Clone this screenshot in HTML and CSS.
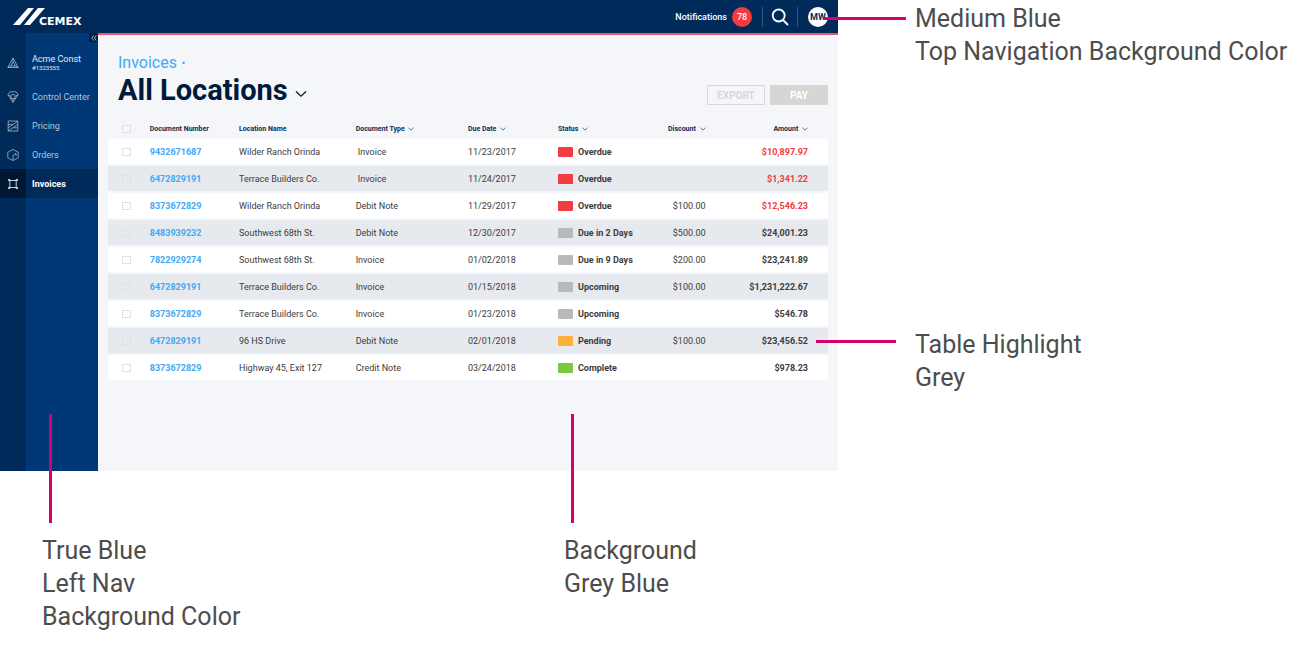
FILE: index.html
```html
<!DOCTYPE html>
<html lang="en">
<head>
<meta charset="utf-8">
<title>Invoices – All Locations</title>
<link rel="stylesheet" href="styles.css">
</head>
<body>
<svg class="symbols">
  <symbol id="chevron" viewBox="0 0 12 8"><path d="M1 1.5 6 6.2 11 1.5" fill="none" stroke="currentColor" stroke-width="1.3"/></symbol>
</svg>
<div class="sheet">
  <div class="app">
    <header class="topbar">
      <a class="brand" href="#" aria-label="Cemex home">
        <svg width="76" height="24" viewBox="0 -3 76 24">
          <path d="M0 17 15 0H21L7 17ZM11 17 25 0H32L17 17Z" fill="#fff"/>
          <text class="wordmark" x="26" y="17">CEMEX</text>
        </svg>
      </a>
      <div class="tools">
        <a class="notifications" href="#">Notifications <span class="count">78</span></a>
        <button class="search" aria-label="Search">
          <svg width="18" height="18" viewBox="0 0 18 18" fill="none" stroke="#fff" stroke-width="1.8"><circle cx="7.7" cy="7.5" r="6"/><path d="m12 12 5 5"/></svg>
        </button>
        <button class="avatar">MW</button>
      </div>
    </header>
    <nav class="sidebar">
      <button class="collapse" aria-label="Collapse menu"><svg width="6" height="6" viewBox="0 0 6 6" fill="none" stroke="#c5d1e0" stroke-width=".8"><path d="M2.8.4.8 3l2 2.6M5.4.4 3.4 3l2 2.6"/></svg></button>
      <a class="item account" href="#">
        <span class="glyph"><svg viewBox="0 0 12 12"><path d="M6 1 11.2 10.5H.8ZM6 5 8.4 9H3.6ZM6 1V5M.8 10.5 3.6 9M11.2 10.5 8.4 9"/></svg></span>
        <span class="label">Acme Const<small>#1323555</small></span>
      </a>
      <a class="item" href="#">
        <span class="glyph"><svg viewBox="0 0 12 12"><path d="M3 .8H9L11.2 3.6 6 11.4.8 3.6ZM.8 3.6 4 5.5M11.2 3.6 8 5.5M4 7.5V5Q4 3.4 6 3.4T8 5V7.5ZM6 7.5V11.4"/></svg></span>
        <span class="label">Control Center</span>
      </a>
      <a class="item" href="#">
        <span class="glyph"><svg viewBox="0 0 12 12"><path d="M1.2 1H10.8V11H1.2ZM1.2 7.8 10.8 1.2M1.2 11 10.8 4.4M1.2 4.4H6M6.2 7.8H10.8"/></svg></span>
        <span class="label">Pricing</span>
      </a>
      <a class="item" href="#">
        <span class="glyph"><svg viewBox="0 0 12 12"><path d="M6 .5 11.2 3.2V8.8L6 11.5.8 8.8V3.2ZM6 11.5V6.2L9 4.4V7"/></svg></span>
        <span class="label">Orders</span>
      </a>
      <a class="item current" href="#" aria-current="page">
        <span class="glyph"><svg viewBox="0 0 12 12"><path d="M2.8 2.5H9.2V9.5H2.8ZM1.4 1.4H2.8V2.5H1.4ZM9.2 1.4H10.6V2.5H9.2ZM1.4 9.5H2.8V10.6H1.4ZM9.2 9.5H10.6V10.6H9.2Z"/></svg></span>
        <span class="label">Invoices</span>
      </a>
    </nav>
    <main class="content">
      <div class="heading">
        <div class="titles">
          <a class="crumb" href="#">Invoices <b>·</b></a>
          <h1><button class="location">All Locations <svg width="12" height="8"><use href="#chevron"/></svg></button></h1>
        </div>
        <div class="actions">
          <button class="action outline">EXPORT</button>
          <button class="action solid">PAY</button>
        </div>
      </div>
      <table class="invoices">
        <colgroup><col class="c-check"><col class="c-number"><col class="c-place"><col class="c-type"><col class="c-due"><col class="c-status"><col class="c-discount"><col class="c-amount"></colgroup>
        <thead>
          <tr>
            <th class="pick"><input type="checkbox" aria-label="Select all"></th>
            <th>Document Number</th>
            <th>Location Name</th>
            <th><button class="sort">Document Type <svg width="6" height="4"><use href="#chevron"/></svg></button></th>
            <th><button class="sort">Due Date <svg width="6" height="4"><use href="#chevron"/></svg></button></th>
            <th><button class="sort">Status <svg width="6" height="4"><use href="#chevron"/></svg></button></th>
            <th class="num"><button class="sort">Discount <svg width="6" height="4"><use href="#chevron"/></svg></button></th>
            <th class="num amount"><button class="sort">Amount <svg width="6" height="4"><use href="#chevron"/></svg></button></th>
          </tr>
        </thead>
        <tbody>
          <tr><td class="pick"><input type="checkbox" aria-label="Select 9432671687"></td><td><a href="#">9432671687</a></td><td>Wilder Ranch Orinda</td><td>&nbsp;Invoice</td><td>11/23/2017</td><td class="status overdue">Overdue</td><td class="num"></td><td class="num amount late">$10,897.97</td></tr>
          <tr><td class="pick"><input type="checkbox" aria-label="Select 6472829191"></td><td><a href="#">6472829191</a></td><td>Terrace Builders Co.</td><td>&nbsp;Invoice</td><td>11/24/2017</td><td class="status overdue">Overdue</td><td class="num"></td><td class="num amount late">$1,341.22</td></tr>
          <tr><td class="pick"><input type="checkbox" aria-label="Select 8373672829"></td><td><a href="#">8373672829</a></td><td>Wilder Ranch Orinda</td><td>Debit Note</td><td>11/29/2017</td><td class="status overdue">Overdue</td><td class="num">$100.00</td><td class="num amount late">$12,546.23</td></tr>
          <tr><td class="pick"><input type="checkbox" aria-label="Select 8483939232"></td><td><a href="#">8483939232</a></td><td>Southwest 68th St.</td><td>Debit Note</td><td>12/30/2017</td><td class="status">Due in 2 Days</td><td class="num">$500.00</td><td class="num amount">$24,001.23</td></tr>
          <tr><td class="pick"><input type="checkbox" aria-label="Select 7822929274"></td><td><a href="#">7822929274</a></td><td>Southwest 68th St.</td><td>Invoice</td><td>01/02/2018</td><td class="status">Due in 9 Days</td><td class="num">$200.00</td><td class="num amount">$23,241.89</td></tr>
          <tr><td class="pick"><input type="checkbox" aria-label="Select 6472829191"></td><td><a href="#">6472829191</a></td><td>Terrace Builders Co.</td><td>Invoice</td><td>01/15/2018</td><td class="status">Upcoming</td><td class="num">$100.00</td><td class="num amount">$1,231,222.67</td></tr>
          <tr><td class="pick"><input type="checkbox" aria-label="Select 8373672829"></td><td><a href="#">8373672829</a></td><td>Terrace Builders Co.</td><td>Invoice</td><td>01/23/2018</td><td class="status">Upcoming</td><td class="num"></td><td class="num amount">$546.78</td></tr>
          <tr><td class="pick"><input type="checkbox" aria-label="Select 6472829191"></td><td><a href="#">6472829191</a></td><td>96 HS Drive</td><td>Debit Note</td><td>02/01/2018</td><td class="status pending">Pending</td><td class="num">$100.00</td><td class="num amount">$23,456.52</td></tr>
          <tr><td class="pick"><input type="checkbox" aria-label="Select 8373672829"></td><td><a href="#">8373672829</a></td><td>Highway 45, Exit 127</td><td>Credit Note</td><td>03/24/2018</td><td class="status complete">Complete</td><td class="num"></td><td class="num amount">$978.23</td></tr>
        </tbody>
      </table>
    </main>
  </div>
  <aside class="side-notes">
    <p class="note reach-topbar">Medium Blue<br>Top Navigation Background Color</p>
    <p class="note reach-row">Table Highlight<br>Grey</p>
  </aside>
  <div class="foot-notes">
    <p class="note reach-up">True Blue<br>Left Nav<br>Background Color</p>
    <p class="note reach-up">Background<br>Grey Blue</p>
  </div>
</div>
</body>
</html>
```
FILE: styles.css
```css
* { box-sizing: border-box; }

body {
  margin: 0;
  background: #fff;
  color: #3c3c3c;
  font-family: Roboto, "Liberation Sans", sans-serif;
}

a { color: inherit; text-decoration: none; }

button {
  padding: 0;
  border: 0;
  background: none;
  color: inherit;
  font: inherit;
  cursor: pointer;
}

.symbols { display: none; }

.sheet {
  display: grid;
  grid-template-columns: minmax(0, 838fr) minmax(0, 461fr);
}

.app {
  display: grid;
  grid-template-columns: 98px minmax(0, 1fr);
  grid-template-rows: auto 1fr;
  background: #f4f6fa;
}

/* Top bar */
.topbar {
  grid-column: 1 / -1;
  display: flex;
  justify-content: space-between;
  align-items: center;
  height: 33px;
  padding: 0 10px 0 13px;
  background: #002a59;
  color: #fff;
}

.brand svg { display: block; }

.wordmark {
  fill: #fff;
  font: bold 11px "DejaVu Sans", sans-serif;
}

.tools { display: flex; align-items: center; }

.notifications {
  display: flex;
  align-items: center;
  gap: 5px;
  padding-right: 10px;
  font-size: 9px;
  font-weight: 500;
}

.count {
  width: 20px;
  height: 20px;
  border-radius: 50%;
  background: #f23b42;
  font-size: 9px;
  line-height: 20px;
  text-align: center;
}

.search {
  display: flex;
  padding: 1px 8px;
  border: solid #3b5878;
  border-width: 0 1px;
}

.avatar {
  width: 20px;
  height: 20px;
  margin-left: 10px;
  border-radius: 50%;
  background: #fff;
  color: #002a59;
  font-size: 9px;
  font-weight: 700;
}

/* Left navigation */
.sidebar {
  position: relative;
  padding-top: 11px;
  background: linear-gradient(90deg, #002a59 26px, #003876 26px);
  color: #b3c5d9;
}

.collapse {
  position: absolute;
  top: 0;
  right: 0;
  display: grid;
  place-items: center;
  width: 9px;
  height: 9px;
  background: #001f43;
}

.item {
  display: grid;
  grid-template-columns: 26px 1fr;
  align-items: center;
  height: 29px;
  font-size: 9px;
}

.account { height: 38px; color: #e3eaf2; }

.glyph { display: grid; place-items: center; height: 100%; }

.glyph svg {
  width: 12px;
  height: 12px;
  fill: none;
  stroke: #a5b6ca;
  stroke-width: .8;
}

.label { padding-left: 6px; line-height: 10px; white-space: nowrap; }
.label small { display: block; font-size: 6px; line-height: 8px; }

.current { background: #002a59; color: #fff; font-weight: 700; }
.current .glyph { background: #001733; }
.current .glyph svg { stroke: #fff; }

/* Content */
.content {
  padding: 18px 10px 89px;
  border-top: 2px solid #f0566a;
}

.heading {
  display: flex;
  justify-content: space-between;
  align-items: flex-end;
  padding-left: 10px;
}

.crumb {
  display: block;
  color: #41a9f5;
  font-size: 16px;
  line-height: 20px;
}

h1 {
  margin: 0;
  color: #001a3a;
  font-size: 29px;
  font-weight: 700;
  line-height: 34px;
}

.location svg { vertical-align: 2px; }

.actions { display: flex; gap: 5px; padding-bottom: 2px; }

.action {
  width: 58px;
  height: 20px;
  border: 1px solid #d8d8d8;
  font-size: 10px;
  font-weight: 700;
}

.outline { color: #d8d8d8; }
.solid { background: #d6d6d6; color: #fff; }

/* Invoice table */
.invoices {
  width: 100%;
  margin-top: 11px;
  border-collapse: separate;
  border-spacing: 0 2px;
  table-layout: fixed;
  font-size: 9px;
}

.c-check { width: 5.8%; }
.c-number { width: 12.4%; }
.c-place { width: 16.2%; }
.c-type { width: 15.6%; }
.c-due { width: 12.5%; }
.c-status { width: 12.5%; }
.c-discount { width: 8%; }
.c-amount { width: 17%; }

th, td {
  height: 25px;
  padding: 0;
  text-align: left;
  white-space: nowrap;
}

th { height: 17px; color: #0d2c51; font-size: 7px; font-weight: 700; }

.sort svg { margin-left: 2px; }

tbody tr { background: #fff; }
tbody tr:nth-child(even) { background: #e6e9ee; }

.pick { padding-left: 14px; }

.pick input {
  display: block;
  width: 9px;
  height: 8px;
  margin: 0;
  border: 1px solid #dfe1e4;
  appearance: none;
}

td a { color: #41a9f5; font-weight: 700; }

.num { text-align: right; }
.amount { padding-right: 20px; }
td.amount, td.status { font-weight: 700; }
.late { color: #f23b42; }

.status::before {
  content: "";
  display: inline-block;
  width: 15px;
  height: 10px;
  margin-right: 5px;
  border-radius: 1px;
  background: #b8b9bd;
  vertical-align: -2px;
}

.overdue::before { background: #f23b42; }
.pending::before { background: #fdb03b; }
.complete::before { background: #7ac943; }

/* Notes with leader lines */
.note {
  position: relative;
  margin: 0;
  color: #4d4d4d;
  font-size: 25px;
  line-height: 33px;
  white-space: nowrap;
}

.note::before {
  content: "";
  position: absolute;
  background: #d6006d;
}

.side-notes {
  display: flex;
  flex-direction: column;
  gap: 260px;
  padding: 2px 0 0 77px;
}

.reach-topbar::before { top: 15px; left: -92px; width: 83px; height: 3px; }
.reach-row::before { top: 12px; left: -99px; width: 80px; height: 3px; }

.foot-notes {
  grid-column: 1 / -1;
  display: grid;
  grid-template-columns: 522fr 735fr;
  padding: 63px 0 36px 42px;
}

.reach-up::before { top: -120px; left: 7px; width: 3px; height: 109px; }
```
